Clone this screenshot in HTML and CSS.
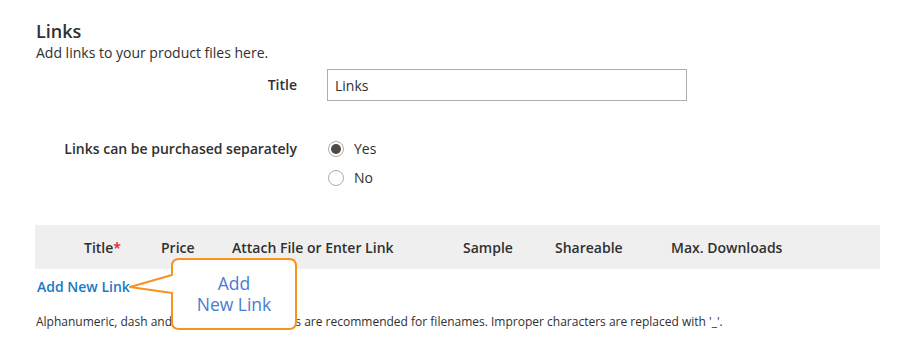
FILE: index.html
```html
<!DOCTYPE html>
<html lang="en">
<head>
  <meta charset="UTF-8">
  <title>Links</title>
  <link rel="stylesheet" href="styles.css">
</head>
<body>
  <div class="section">
    <h2 class="section-title">Links</h2>
    <p class="section-note">Add links to your product files here.</p>

    <div class="field">
      <label class="field-label">Title</label>
      <input class="text-input" type="text" value="Links">
    </div>

    <div class="field field-radios">
      <span class="field-label">Links can be purchased separately</span>
      <div class="radio-list">
        <label class="radio"><span class="radio-dot checked"></span>Yes</label>
        <label class="radio"><span class="radio-dot"></span>No</label>
      </div>
    </div>

    <div class="grid-head">
      <span class="col col-title">Title<span class="req">*</span></span>
      <span class="col col-price">Price</span>
      <span class="col col-file">Attach File or Enter Link</span>
      <span class="col col-sample">Sample</span>
      <span class="col col-share">Shareable</span>
      <span class="col col-max">Max. Downloads</span>
    </div>

    <div class="add-row">
      <a class="add-link" href="#">Add New Link</a>
      <div class="callout">
        <svg class="callout-shape" width="172" height="74" viewBox="0 0 172 74">
          <path d="M45 9 Q45 2 52 2 L162 2 Q169 2 169 9 L169 65 Q169 72 162 72 L52 72 Q45 72 45 65 L45 36 L3 30 L45 18 Z"
                fill="#fff" stroke="#f7931e" stroke-width="2" stroke-linejoin="round"/>
        </svg>
        <div class="callout-text">Add<br>New Link</div>
      </div>
    </div>

    <p class="file-note">Alphanumeric, dash and underscore characters are recommended for filenames. Improper characters are replaced with '_'.</p>
  </div>
</body>
</html>
```

FILE: styles.css
```css
body {
  margin: 0;
  background: #fff;
  font-family: "Open Sans", "Noto Sans", sans-serif;
  color: #303030;
}
.section {
  padding: 20px 29px 0 35px;
}
.section-title {
  margin: 0;
  font-size: 18px;
  line-height: 22px;
  font-weight: 600;
  color: #303030;
  padding-left: 1px;
}
.section-note {
  margin: 2px 0 0;
  font-size: 14px;
  line-height: 18px;
  padding-left: 1px;
}
.field {
  display: flex;
  align-items: center;
  gap: 30px;
  margin-top: 7px;
}
.field-label {
  width: 262px;
  text-align: right;
  font-size: 14px;
  font-weight: 600;
  line-height: 20px;
}
.text-input {
  width: 360px;
  height: 32px;
  box-sizing: border-box;
  border: 1px solid #adadad;
  padding: 0 7px;
  font-family: inherit;
  font-size: 14px;
  color: #303030;
  margin: 0;
}
.field-radios {
  align-items: flex-start;
  margin-top: 38px;
}
.radio-list {
  display: flex;
  flex-direction: column;
  gap: 9px;
}
.radio {
  display: flex;
  align-items: center;
  gap: 10px;
  font-size: 14px;
  line-height: 20px;
}
.radio-dot {
  width: 14px;
  height: 14px;
  border: 1px solid #adadad;
  border-radius: 50%;
  box-sizing: content-box;
  display: flex;
  align-items: center;
  justify-content: center;
  margin-left: 1px;
}
.radio-dot.checked::after {
  content: "";
  width: 10px;
  height: 10px;
  border-radius: 50%;
  background: #514943;
}
.grid-head {
  display: flex;
  align-items: center;
  height: 44px;
  margin-top: 37px;
  background: #efefef;
  font-size: 14px;
  font-weight: 600;
  padding-left: 49px;
}
.col-title { width: 77px; }
.col-price { width: 71px; }
.col-file { width: 231px; }
.col-sample { width: 92px; }
.col-share { width: 116px; }
.req { color: #e22626; }
.add-row {
  position: relative;
  height: 34px;
  display: flex;
  align-items: center;
}
.add-link {
  color: #1979c3;
  font-size: 14px;
  font-weight: 600;
  text-decoration: none;
  margin-left: 2px;
}
.callout {
  position: absolute;
  left: 92px;
  top: -12px;
  width: 172px;
  height: 74px;
}
.callout-shape {
  position: absolute;
  left: 0;
  top: 0;
}
.callout-text {
  position: absolute;
  left: 45px;
  width: 124px;
  top: 16px;
  text-align: center;
  font-size: 17.5px;
  line-height: 21px;
  color: #4a7bd2;
}
.file-note {
  margin: 10px 0 0 1px;
  font-size: 12px;
  line-height: 18px;
}
```
